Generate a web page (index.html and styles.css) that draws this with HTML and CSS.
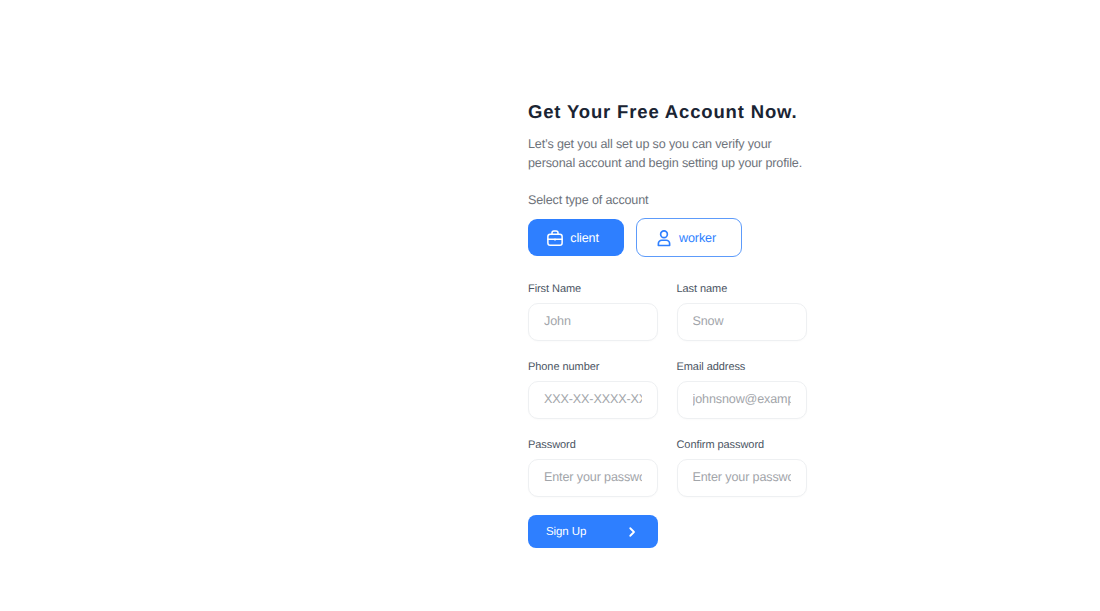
FILE: index.html
```html
<!DOCTYPE html>
<html lang="en">
<head>
<meta charset="utf-8">
<title>Sign up</title>
<link rel="stylesheet" href="styles.css">
</head>
<body>
<main class="page">
  <form class="signup">
    <h1 class="title">Get Your Free Account Now.</h1>
    <p class="lead">Let’s get you all set up so you can verify your personal account and begin setting up your profile.</p>
    <p class="type-label">Select type of account</p>
    <div class="types">
      <button type="button" class="type type-active">
        <svg class="type-icon" viewBox="0 0 24 24" fill="none" stroke="currentColor" stroke-width="2" stroke-linecap="round" stroke-linejoin="round"><rect x="2.500" y="7" width="19" height="14.500" rx="3"/><path d="M8 7V5a2.500 2.500 0 0 1 2.500-2.500h3A2.500 2.500 0 0 1 16 5v2"/><path d="M2.500 13.500h19"/><path d="M12 13.500v1"/></svg>
        client
      </button>
      <button type="button" class="type type-outline">
        <svg class="type-icon" viewBox="0 0 24 24" fill="none" stroke="currentColor" stroke-width="2.200" stroke-linecap="round" stroke-linejoin="round"><circle cx="12" cy="7" r="4.500"/><path d="M4.500 22v-2.500a4.500 4.500 0 0 1 4.500-4.500h6a4.500 4.500 0 0 1 4.500 4.500V22z"/></svg>
        worker
      </button>
    </div>
    <div class="fields">
      <label class="field"><span class="field-label">First Name</span><input class="input" placeholder="John"></label>
      <label class="field"><span class="field-label">Last name</span><input class="input" placeholder="Snow"></label>
      <label class="field"><span class="field-label">Phone number</span><input class="input" placeholder="XXX-XX-XXXX-XXX"></label>
      <label class="field"><span class="field-label">Email address</span><input class="input" placeholder="johnsnow@example.com"></label>
      <label class="field"><span class="field-label">Password</span><input class="input" type="password" placeholder="Enter your password"></label>
      <label class="field"><span class="field-label">Confirm password</span><input class="input" type="password" placeholder="Enter your password"></label>
      <button type="button" class="submit">
        <span>Sign Up</span>
        <svg class="submit-icon" viewBox="0 0 24 24" fill="none" stroke="currentColor" stroke-width="3.600" stroke-linecap="round" stroke-linejoin="round"><path d="M8.500 4.500l7.500 7.500-7.500 7.500"/></svg>
      </button>
    </div>
  </form>
</main>
</body>
</html>
```
FILE: styles.css
```css
* { box-sizing: border-box; }
html, body { margin: 0; height: 100%; background: #fff; }
body { font-family: "Liberation Sans", Arial, sans-serif; overflow: hidden; text-rendering: geometricPrecision; }
.page { display: flex; padding: 100px 0 0 528px; }
.signup { width: 279px; display: flex; flex-direction: column; }
.title { margin: 0; font-size: 18.5px; line-height: 23px; font-weight: 700; color: #1a2433; letter-spacing: 0.84px; white-space: nowrap; }
.lead { margin: 12px 0 0; font-size: 12.6px; line-height: 19px; letter-spacing: -0.16px; color: #6e737b; }
.type-label { margin: 17px 0 0; font-size: 12.6px; line-height: 20px; letter-spacing: -0.16px; color: #6e737b; }
.types { display: flex; gap: 12px; align-items: center; margin-top: 8px; }
.type { display: flex; align-items: center; justify-content: center; gap: 6px; font: 12.6px/20px "Liberation Sans", Arial, sans-serif; letter-spacing: -0.14px; text-rendering: geometricPrecision; border-radius: 9px; padding: 0 7px 0 0; }
.type-active { width: 96px; height: 37px; background: #2e7fff; color: #fff; border: 0; }
.type-outline { width: 106px; height: 39px; background: #fff; color: #2e7fff; border: 1px solid #5d9bfa; }
.type-icon { width: 18px; height: 18px; }
.fields { display: grid; grid-template-columns: 130px 130px; column-gap: 18.5px; row-gap: 18px; margin-top: 24px; }
.field { display: flex; flex-direction: column; gap: 5px; min-width: 0; }
.field-label { font-size: 11px; line-height: 17px; letter-spacing: -0.07px; color: #4b5563; }
.input { width: 100%; height: 38px; padding: 0 15px 2px; border: 1px solid #eef0f2; border-radius: 10px; font: 12.6px "Liberation Sans", Arial, sans-serif; letter-spacing: -0.14px; text-rendering: geometricPrecision; color: #1f2937; background: #fff; outline: 0; box-shadow: 0 1px 2px rgba(0,0,0,.02); }
.input::placeholder { color: #a2a5aa; opacity: 1; }
.submit { display: flex; align-items: center; justify-content: space-between; height: 33px; padding: 0 18px; background: #2e7fff; color: #fff; border: 0; border-radius: 8px; font: 11.5px "Liberation Sans", Arial, sans-serif; letter-spacing: -0.1px; text-rendering: geometricPrecision; }
.submit-icon { width: 12px; height: 12px; margin-right: 2px; }
```
